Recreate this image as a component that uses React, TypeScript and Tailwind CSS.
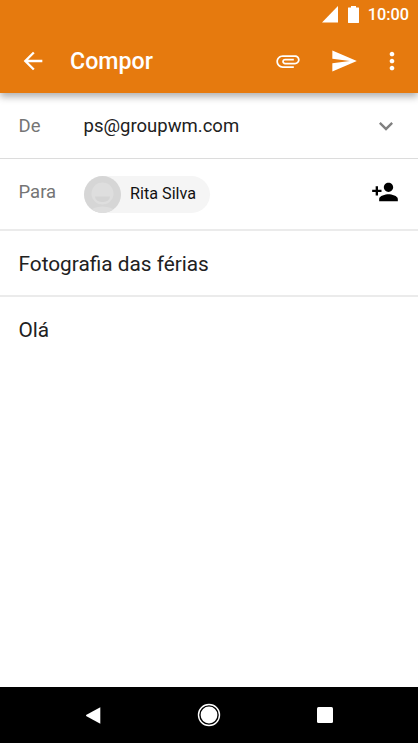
import type { ReactNode } from 'react'

type IconProps = {
  path: string;
  className?: string;
}

const ICONS = {
  back: 'M20 11H7.83l5.59-5.59L12 4l-8 8 8 8 1.41-1.41L7.83 13H20v-2z',
  attachment: 'M7.5 18C4.46 18 2 15.54 2 12.5S4.46 7 7.5 7H18c2.21 0 4 1.79 4 4s-1.79 4-4 4H9.5C8.12 15 7 13.88 7 12.5S8.12 10 9.5 10H17v1.5H9.5c-.55 0-1 .45-1 1s.45 1 1 1H18c1.38 0 2.5-1.12 2.5-2.5S19.38 8.5 18 8.5H7.5c-2.21 0-4 1.79-4 4s1.79 4 4 4H17V18H7.5z',
  send: 'M2.01 21L23 12 2.01 3 2 10l15 2-15 2z',
  more: 'M12 8c1.1 0 2-.9 2-2s-.9-2-2-2-2 .9-2 2 .9 2 2 2zm0 2c-1.1 0-2 .9-2 2s.9 2 2 2 2-.9 2-2-.9-2-2-2zm0 6c-1.1 0-2 .9-2 2s.9 2 2 2 2-.9 2-2-.9-2-2-2z',
  expand: 'M16.59 8.59L12 13.17 7.41 8.59 6 10l6 6 6-6z',
  addPerson: 'M15 12c2.21 0 4-1.79 4-4s-1.79-4-4-4-4 1.79-4 4 1.79 4 4 4zm-9-2V7H4v3H1v2h3v3h2v-3h3v-2H6zm9 4c-2.67 0-8 1.34-8 4v2h16v-2c0-2.66-5.33-4-8-4z',
}

function Icon({ path, className = '' }: IconProps) {
  return (
    <svg viewBox="0 0 24 24" fill="currentColor" className={`size-[28px] shrink-0 ${className}`}>
      <path d={path} />
    </svg>
  )
}

function StatusBar() {
  return (
    <div className="flex h-[28px] items-center justify-end pr-[9px]">
      <svg viewBox="0 0 16 17" className="mr-[10px] h-[17px] w-[16px]" fill="currentColor">
        <path d="M16 0v16.5H0z" />
      </svg>
      <svg viewBox="0 0 11 17" className="mr-[8.5px] h-[17px] w-[11px]" fill="currentColor">
        <path d="M3 0h5v1.4h2.6q.4 0 .4.4v14.8q0 .4-.4.4H.4q-.4 0-.4-.4V1.8q0-.4.4-.4H3z" />
      </svg>
      <span className="pt-[2px] text-[16.3px] leading-none font-medium">10:00</span>
    </div>
  )
}

function Toolbar() {
  return (
    <div className="flex h-[65px] items-center pr-[12px] pl-[18.5px]">
      <Icon path={ICONS.back} />
      <h1 className="ml-[23.5px] flex-1 pt-[2px] text-[23.2px] leading-none font-medium">Compor</h1>
      <Icon path={ICONS.attachment} />
      <Icon path={ICONS.send} className="ml-[28px]" />
      <Icon path={ICONS.more} className="ml-[20.5px]" />
    </div>
  )
}

function Recipient({ name }: { name: string }) {
  return (
    <div className="flex h-[37px] items-center rounded-full bg-[#f5f5f5] pr-[14px]">
      <svg viewBox="0 0 37 37" className="size-[37px]">
        <defs>
          <clipPath id="avatar">
            <circle cx="18.5" cy="18.5" r="18.5" />
          </clipPath>
        </defs>
        <g clipPath="url(#avatar)">
          <rect width="37" height="37" fill="#d6d6d6" />
          <circle cx="18.5" cy="17.5" r="11" fill="#dedede" />
          <path d="M11 20.5h15a7.5 5.5 0 0 1-15 0z" fill="#d4d4d4" />
          <ellipse cx="18.5" cy="36" rx="12" ry="5.5" fill="#dedede" />
        </g>
      </svg>
      <span className="ml-[9.5px] pt-px text-[16.2px] leading-none text-[#111111]">{name}</span>
    </div>
  )
}

function Field({ label, children }: { label: string; children: ReactNode }) {
  return (
    <>
      <span className="w-[65px] shrink-0 text-[18.5px] leading-none text-[#757575]">{label}</span>
      {children}
    </>
  )
}

function NavBar() {
  return (
    <nav className="flex h-[56px] shrink-0 items-center justify-between bg-black pr-[85px] pl-[86px] text-white">
      <svg viewBox="0 0 15 17" className="h-[17px] w-[15px]" fill="currentColor">
        <path d="M14.3.3v16.4L.5 9.2q-1-.7 0-1.4z" />
      </svg>
      <svg viewBox="0 0 24 24" className="size-[24px]">
        <circle cx="12" cy="12" r="10.5" fill="none" stroke="currentColor" strokeWidth="1.4" />
        <circle cx="12" cy="12" r="8.4" fill="currentColor" />
      </svg>
      <div className="size-[16px] rounded-[1.5px] bg-white" />
    </nav>
  )
}

function App() {
  return (
    <div className="flex h-[743px] w-[418px] flex-col overflow-hidden bg-white font-['Roboto',sans-serif] text-[#212121]">
      <header className="relative h-[93px] shrink-0 bg-[#e67a0e] text-white shadow-[0_4px_7px_rgba(0,0,0,0.3)]">
        <StatusBar />
        <Toolbar />
      </header>
      <main className="flex-1">
        <div className="flex h-[66px] items-center border-b border-[#dcdcdc] pt-[2px] pr-[18.5px] pl-[18.5px]">
          <Field label="De">
            <span className="flex-1 text-[18.5px] leading-none">ps@groupwm.com</span>
            <Icon path={ICONS.expand} className="-mt-[2px] text-[#808080]" />
          </Field>
        </div>
        <div className="flex h-[72px] items-center border-b-2 border-[#ebebeb] pb-[4px] pr-[19px] pl-[18.5px]">
          <Field label="Para">
            <div className="pt-[4px]">
              <Recipient name="Rita Silva" />
            </div>
            <Icon path={ICONS.addPerson} className="ml-auto text-black" />
          </Field>
        </div>
        <div className="flex h-[66px] items-center border-b-2 border-[#ebebeb] px-[18.5px] pt-[2px] text-[20.8px] leading-none">
          Fotografia das férias
        </div>
        <div className="flex h-[66px] items-center px-[18.5px] pt-px text-[20.8px] leading-none">Olá</div>
      </main>
      <NavBar />
    </div>
  )
}

export default App
